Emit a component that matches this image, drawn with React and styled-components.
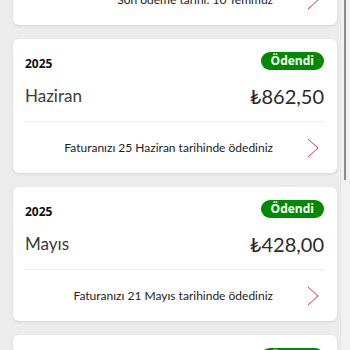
import React from "react";
import styled, { createGlobalStyle } from "styled-components";

const Global = createGlobalStyle`
  html, body { margin: 0; padding: 0; background: #ececec; overflow: hidden; }
  body { font-family: "Lato", "Open Sans", sans-serif; }
`;

const Page = styled.div`
  height: 350px;
  overflow: hidden;
  position: relative;
`;

const List = styled.div`
  display: flex;
  flex-direction: column;
  gap: 14px;
  padding: 0 13px;
  margin-top: -109px;
`;

const Card = styled.div`
  background: #fff;
  border-radius: 6px;
  box-shadow: 0 1px 3px rgba(0, 0, 0, 0.1);
  padding: 0 13px 0 12px;
  height: 134px;
  box-sizing: border-box;
  display: flex;
  flex-direction: column;
`;

const Header = styled.div`
  display: flex;
  justify-content: space-between;
  align-items: flex-start;
  padding-top: 13px;
`;

const Year = styled.div`
  font-family: "Open Sans", sans-serif;
  font-size: 12px;
  font-weight: 700;
  color: #111;
  line-height: 16px;
  padding-top: 4px;
`;

const Badge = styled.div`
  font-family: "Open Sans", sans-serif;
  background: #008a00;
  color: #fff;
  font-size: 12px;
  font-weight: 700;
  height: 18px;
  line-height: 18px;
  padding: 0 10px;
  border-radius: 9px;
`;

const MainRow = styled.div`
  display: flex;
  justify-content: space-between;
  align-items: center;
  margin-top: 11px;
  height: 26px;
  color: #3a3a3a;
  font-weight: 400;
`;

const Month = styled.span`
  font-size: 17px;
`;

const Amount = styled.span`
  font-size: 20px;
  color: #2a2a2a;
`;

const Divider = styled.div`
  height: 1px;
  background: #ececec;
  margin-top: 13px;
`;

const Footer = styled.div`
  height: 52px;
  display: flex;
  align-items: center;
  justify-content: flex-end;
  gap: 34px;
  padding-right: 5px;
`;

const FooterText = styled.div`
  font-size: 12px;
  color: #222;
`;

const Scrollbar = styled.div`
  position: absolute;
  top: 0;
  right: 0;
  width: 9px;
  height: 350px;
  background: #f1f1f1;
  border-left: 1px solid #e4e4e4;
`;

const Thumb = styled.div`
  position: absolute;
  top: 0;
  left: 3px;
  width: 2px;
  height: 180px;
  background: #8a8a8a;
`;

const Chevron = () => (
  <svg width="12" height="20" viewBox="0 0 12 20" fill="none">
    <path d="M1 1 L11 10 L1 19" stroke="#e8323c" strokeWidth="1" />
  </svg>
);

const data = [
  { year: "2025", month: "Temmuz", amount: "₺0,00", text: "Son ödeme tarihi: 10 Temmuz" },
  { year: "2025", month: "Haziran", amount: "₺862,50", text: "Faturanızı 25 Haziran tarihinde ödediniz" },
  { year: "2025", month: "Mayıs", amount: "₺428,00", text: "Faturanızı 21 Mayıs tarihinde ödediniz" },
  { year: "2025", month: "Nisan", amount: "₺428,00", text: "Faturanızı 21 Nisan tarihinde ödediniz" },
];

export default function App() {
  return (
    <Page>
      <Global />
      <List>
        {data.map((d, i) => (
          <Card key={i}>
            <Header>
              <Year>{d.year}</Year>
              <Badge>Ödendi</Badge>
            </Header>
            <MainRow>
              <Month>{d.month}</Month>
              <Amount>{d.amount}</Amount>
            </MainRow>
            <Divider />
            <Footer>
              <FooterText>{d.text}</FooterText>
              <Chevron />
            </Footer>
          </Card>
        ))}
      </List>
      <Scrollbar>
        <Thumb />
      </Scrollbar>
    </Page>
  );
}
